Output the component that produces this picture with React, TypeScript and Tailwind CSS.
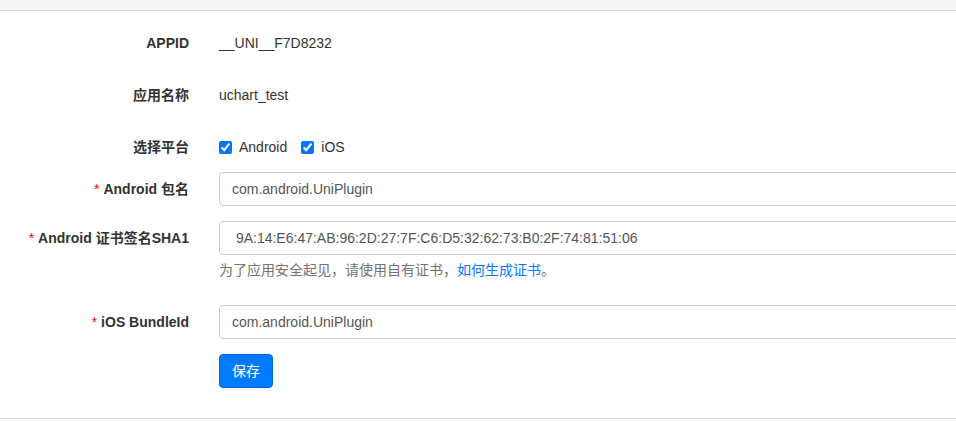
import React from "react";

const font = {
  fontFamily: '"Liberation Sans", "Noto Sans CJK SC", Arial, sans-serif',
};

const Label = ({ children, required }: { children: React.ReactNode; required?: boolean }) => (
  <div className="w-[189px] shrink-0 text-right font-bold text-[#333]">
    {required && <span className="mr-1 text-[#f00] font-normal">*</span>}
    {children}
  </div>
);

const Field = ({ value }: { value: string }) => (
  <input
    readOnly
    value={value}
    className="h-[34px] w-[800px] shrink-0 rounded-[4px] border border-[#ccc] bg-white px-3 text-[14px] text-[#555] outline-none"
    style={font}
  />
);

export default function App() {
  return (
    <div className="h-[422px] w-full overflow-hidden bg-white text-[14px] text-[#333]" style={font}>
      <div className="h-[11px] border-b border-[#ddd] bg-[#f5f5f5]" />

      <div className="flex flex-col border-b border-[#ddd] pb-[30px]">
        <div className="mt-[15px] flex h-[34px] items-center gap-[30px]">
          <Label>APPID</Label>
          <span>__UNI__F7D8232</span>
        </div>

        <div className="mt-[18px] flex h-[34px] items-center gap-[30px]">
          <Label>应用名称</Label>
          <span>uchart_test</span>
        </div>

        <div className="mt-[18px] flex h-[34px] items-center gap-[30px]">
          <Label>选择平台</Label>
          <div className="flex items-center">
            <input type="checkbox" defaultChecked className="m-0 h-[13px] w-[13px] accent-[#0075ff]" />
            <span className="ml-[7px]">Android</span>
            <input type="checkbox" defaultChecked className="m-0 ml-[14px] h-[13px] w-[13px] accent-[#0075ff]" />
            <span className="ml-[7px]">iOS</span>
          </div>
        </div>

        <div className="mt-[8px] flex h-[34px] items-center gap-[30px]">
          <Label required>Android 包名</Label>
          <Field value="com.android.UniPlugin" />
        </div>

        <div className="mt-[15px] flex h-[34px] items-center gap-[30px]">
          <Label required>Android 证书签名SHA1</Label>
          <Field value=" 9A:14:E6:47:AB:96:2D:27:7F:C6:D5:32:62:73:B0:2F:74:81:51:06" />
        </div>
        <div className="ml-[219px] mt-[5px] leading-[20px] text-[#737373]">
          为了应用安全起见，请使用自有证书，<a className="text-[#007bff]">如何生成证书</a>。
        </div>

        <div className="mt-[25px] flex h-[34px] items-center gap-[30px]">
          <Label required>iOS BundleId</Label>
          <Field value="com.android.UniPlugin" />
        </div>

        <div className="ml-[219px] mt-[15px]">
          <button className="h-[34px] w-[54px] rounded-[4px] border border-[#0069d9] bg-[#007bff] text-[14px] text-white">
            保存
          </button>
        </div>
      </div>
    </div>
  );
}
